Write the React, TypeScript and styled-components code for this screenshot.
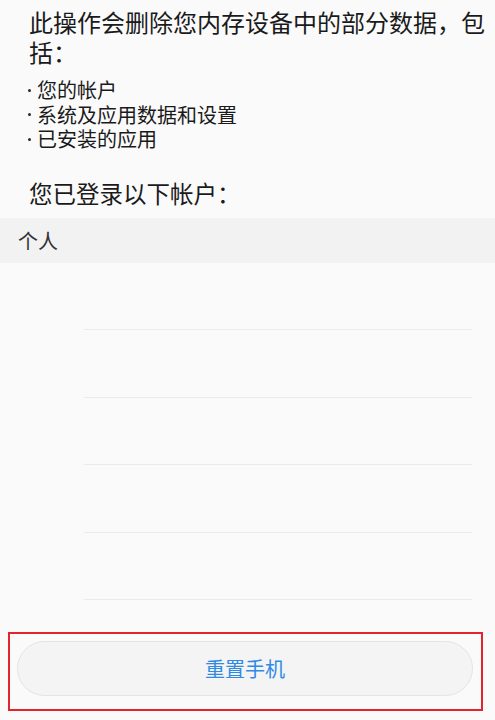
import React from "react";
import styled, { createGlobalStyle } from "styled-components";

const Global = createGlobalStyle`
  html, body { margin: 0; padding: 0; background: #fafafa; }
  body { font-family: "Noto Sans CJK SC", "Noto Sans", sans-serif; }
`;

const Page = styled.div`
  width: 495px;
  height: 720px;
  background: #fafafa;
  display: flex;
  flex-direction: column;
  overflow: hidden;
`;

const Intro = styled.p`
  margin: 7px 8px 0 29px;
  font-size: 24px;
  line-height: 30px;
  color: #1a1a1a;
`;

const BulletList = styled.ul`
  list-style: none;
  margin: 11px 0 0 28px;
  padding: 0;
  font-size: 20px;
  line-height: 24.5px;
  color: #1a1a1a;
`;

const Bullet = styled.li`
  display: flex;
  align-items: center;
  gap: 6px;
  &::before {
    content: "";
    width: 3px;
    height: 3px;
    border-radius: 50%;
    background: #2a2a2a;
    flex: none;
  }
`;

const AccountsTitle = styled.p`
  margin: 26px 0 0 29px;
  font-size: 23.5px;
  line-height: 30px;
  color: #1a1a1a;
`;

const SectionHeader = styled.div`
  margin-top: 10px;
  height: 45px;
  background: #f2f2f2;
  display: flex;
  align-items: center;
  padding-left: 18px;
  font-size: 20px;
  color: #333;
`;

const Rows = styled.div`
  display: flex;
  flex-direction: column;
`;

const Row = styled.div`
  height: 67.5px;
  margin-left: 84px;
  margin-right: 23px;
  box-sizing: border-box;
  border-bottom: 1px solid #ebebeb;
`;

const Highlight = styled.div`
  margin: 32px 12px 0 8px;
  border: 2px solid #e3242f;
  padding: 7px 8px 13px 7px;
`;

const ResetButton = styled.button`
  width: 100%;
  height: 55px;
  border-radius: 28px;
  border: 1px solid #e4e4e4;
  background: #f4f4f4;
  color: #2f8ae6;
  font-family: "Noto Sans CJK SC", "Noto Sans", sans-serif;
  font-size: 20px;
  display: flex;
  align-items: center;
  justify-content: center;
  padding: 0;
`;

export default function App() {
  return (
    <Page>
      <Global />
      <Intro>此操作会删除您内存设备中的部分数据，包括：</Intro>
      <BulletList>
        <Bullet>您的帐户</Bullet>
        <Bullet>系统及应用数据和设置</Bullet>
        <Bullet>已安装的应用</Bullet>
      </BulletList>
      <AccountsTitle>您已登录以下帐户：</AccountsTitle>
      <SectionHeader>个人</SectionHeader>
      <Rows>
        {[0, 1, 2, 3, 4].map((i) => (
          <Row key={i} />
        ))}
      </Rows>
      <Highlight>
        <ResetButton>重置手机</ResetButton>
      </Highlight>
    </Page>
  );
}
